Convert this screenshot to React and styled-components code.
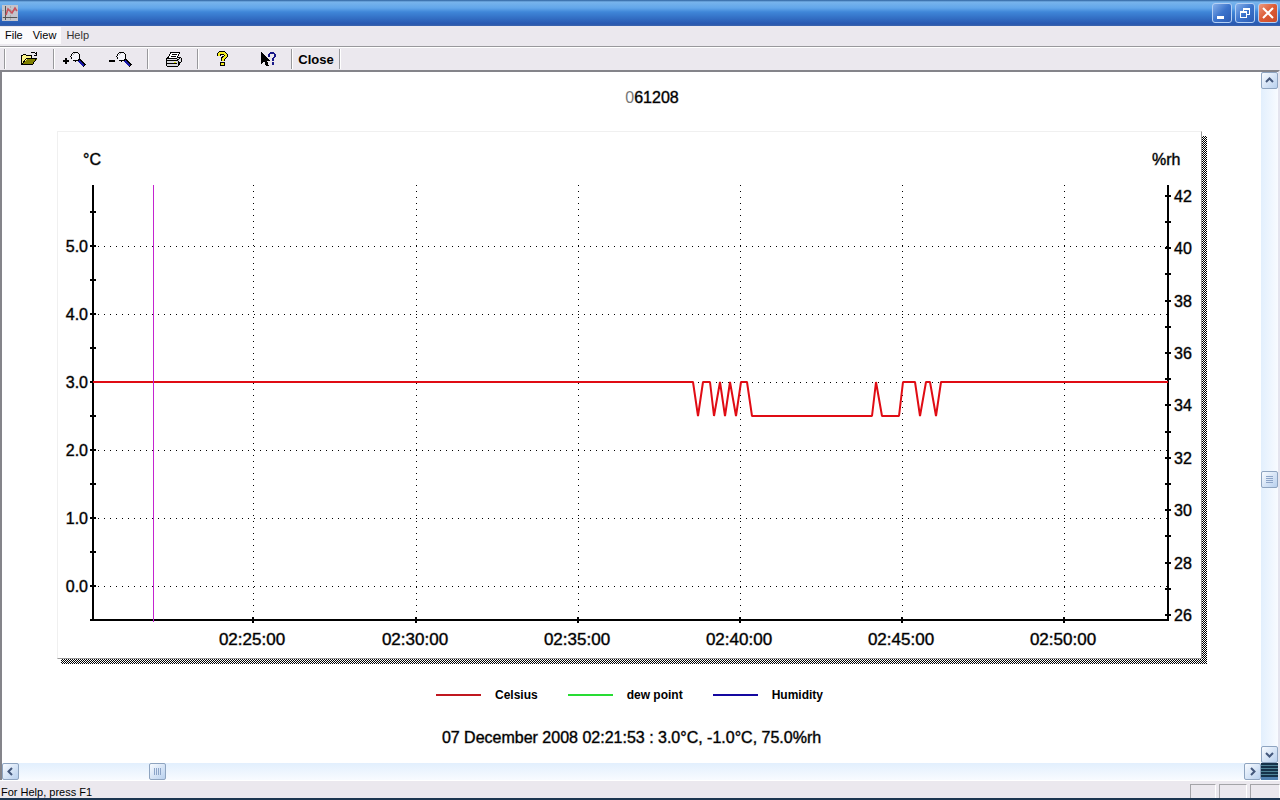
import React, { useState } from 'react';
import styled, { createGlobalStyle } from 'styled-components';

const GlobalStyle = createGlobalStyle`
  * {
    box-sizing: border-box;
  }

  body {
    margin: 0;
    overflow: hidden;
    font-family: "Liberation Sans", Arial, sans-serif;
    color: #000;
  }
`;

const Window = styled.div`
  height: 100vh;
  display: flex;
  flex-direction: column;
  background: #ebe8ee;
  border-bottom: 2px solid #1c3550;
`;

const TitleBar = styled.header`
  height: 26px;
  flex: none;
  display: flex;
  align-items: center;
  gap: 2px;
  padding: 0 2px;
  background: linear-gradient(#2c5f9c 0, #78b4ec 2px, #62a6ea 8px, #3f86d8 12px, #3573c8 17px, #2858b0 24px, #3c64ac 26px);
`;

const Spacer = styled.div`
  flex: 1;
`;

const CaptionButton = styled.button`
  width: 20px;
  height: 20px;
  margin-left: 1px;
  padding: 0;
  display: flex;
  border: 1px solid #b4d0f4;
  border-radius: 3px;
  background: ${props => (props.$danger
    ? 'linear-gradient(135deg, #ec9a80, #dc5a34 50%, #c84c2c)'
    : 'linear-gradient(135deg, #86b0ea, #3c74cc 50%, #2c5cb4)')};
`;

const MenuBar = styled.nav`
  height: 21px;
  flex: none;
  display: flex;
  align-items: center;
  padding-bottom: 2px;
  border-bottom: 1px solid #98989c;
`;

const MenuItem = styled.button`
  height: 17px;
  padding: 0 5px;
  border: 0;
  font-family: inherit;
  font-size: 11px;
  color: ${props => (props.$dim ? '#333' : '#000')};
  background: ${props => (props.$dim ? 'transparent' : '#fbfafc')};
`;

const Toolbar = styled.div`
  height: 23px;
  flex: none;
  display: flex;
  align-items: center;
  padding-left: 4px;
  border-top: 1px solid #fff;
`;

const Separator = styled.span`
  width: 2px;
  height: 20px;
  border-left: 1px solid #98989c;
  border-right: 1px solid #fff;
`;

const ToolButton = styled.button`
  width: ${props => props.$width}px;
  height: 22px;
  padding: 0;
  display: flex;
  align-items: center;
  justify-content: center;
  border: 0;
  background: transparent;
  font-family: inherit;
  font-size: 13px;
  font-weight: bold;
`;

const Client = styled.main`
  flex: 1;
  min-height: 0;
  display: grid;
  grid-template-columns: 1fr 17px;
  grid-template-rows: 1fr 17px;
  border-top: 2px solid #84848a;
  border-left: 2px solid #84848a;
  border-right: 2px solid #e4e4ee;
  background: #fff;
`;

const Page = styled.section`
  min-height: 0;
  overflow: hidden;
  display: flex;
  flex-direction: column;
`;

const Heading = styled.h1`
  margin: 0;
  padding: 16px 0 0 41px;
  height: 59px;
  text-align: center;
  font-size: 16px;
  line-height: 20px;
  font-weight: normal;
  -webkit-text-stroke: 1px rgba(0, 0, 0, 0.4);

  span {
    color: #777;
    -webkit-text-stroke: 0;
  }
`;

const Card = styled.div`
  margin: 0 54px 0 55px;
  padding: 0 5px 5px 0;
  background:
    linear-gradient(#fff, #fff) right top / 5px 5px no-repeat,
    linear-gradient(#fff, #fff) left bottom / 4px 5px no-repeat,
    conic-gradient(#000 25%, #fff 0 50%, #000 0 75%, #fff 0) 0 0 / 2px 2px;
`;

const Plot = styled.svg`
  display: block;
  width: 100%;
  height: auto;
  background: #fff;
  border: 1px solid #f0f0f0;
  border-right-color: #999;
  border-bottom-color: #999;
  font-size: 16px;

  text {
    stroke: rgba(0, 0, 0, 0.4);
    stroke-width: 1px;
  }
`;

const TimeLabel = styled.text`
  font-size: 17px;
  text-anchor: middle;
`;

const Legend = styled.ul`
  margin: 22px 0 0;
  padding: 0 4px 0 0;
  display: flex;
  justify-content: center;
  gap: 30px;
  list-style: none;
  font-size: 12px;
  font-weight: bold;
  line-height: 18px;
`;

const LegendItem = styled.li`
  display: flex;
  align-items: center;
  gap: 14px;

  &::before {
    content: '';
    width: 45px;
    height: 2px;
    background: ${props => props.$color};
  }
`;

const Reading = styled.p`
  margin: 24px 0 0;
  text-align: center;
  font-size: 16px;
  line-height: 20px;
  -webkit-text-stroke: 1px rgba(0, 0, 0, 0.4);
`;

const Track = styled.div`
  display: flex;
  flex-direction: ${props => (props.$vertical ? 'column' : 'row')};
  background: linear-gradient(${props => (props.$vertical ? 'to right' : 'to bottom')}, #e2effd, #f8fbff);
`;

const Fill = styled.span`
  flex: ${props => props.$grow};
`;

const ScrollButton = styled.button`
  width: 17px;
  height: 17px;
  flex: none;
  padding: 0;
  display: flex;
  border: 1px solid #8ea4c0;
  border-radius: 2px;
  background: linear-gradient(135deg, #f8fbff, #b8d0ee);
`;

const Corner = styled.span`
  background: repeating-linear-gradient(#16324a 0 2px, #4f8296 2px 3px);
  border-bottom: 3px solid #5080b0;
`;

const StatusBar = styled.footer`
  height: 18px;
  flex: none;
  display: flex;
  gap: 3px;
  padding-left: 1px;
  border-top: 1px solid #fff;
  font-size: 11px;
  line-height: 22px;
`;

const StatusPane = styled.span`
  width: ${props => props.$width}px;
  margin-top: 3px;
  border: 1px solid #a4a4a8;
  border-right-color: #fff;
  border-bottom: 0;
`;

const AppIcon = () => (
  <svg width="16" height="16" viewBox="0 0 16 16">
    <rect width="16" height="16" fill="#c4c4cc" />
    <path d="M0 12.5h16M8.5 1v14M0 5.5h15" stroke="#aaa" strokeDasharray="2 1" />
    <path d="M3.5 1v14M1 12.5h14" stroke="#555" />
    <path d="M4 10l2-6 4 4 3-5 2 3" fill="none" stroke="#c8505c" strokeWidth="1.5" />
  </svg>
);

const OpenIcon = () => (
  <svg width="17" height="16" viewBox="0 0 17 16" shapeRendering="crispEdges">
    <path d="M1 13V4h4v1h5v3h5l-4 6H1z" fill="#fbf58c" />
    <path d="M2 13l4-5h10l-4 5z" fill="#808000" />
    <path d="M.5 13.5v-9h1l1-1h2l1 1h5v3M.5 13.5h11l4-6H5.500L1 13M9.500 2.500l1-1h3l2 2M15.500 1v3h-3" fill="none" stroke="#000" />
  </svg>
);

const ZoomIcon = ({ plus }) => (
  <svg width="24" height="18" viewBox="0 0 24 18" shapeRendering="crispEdges">
    <path d="M1 11h6" stroke="#000" strokeWidth="2" />
    {plus && <path d="M4 8v6" stroke="#000" strokeWidth="2" />}
    <circle cx="13.500" cy="6.500" r="4.500" fill="#f4f4fa" stroke="#000" />
    <path d="M17 10l6 6" stroke="#000" strokeWidth="3" />
    <path d="M17 11l5 5" stroke="#1818a8" strokeWidth="2" />
    <path d="M11 5l2-2" stroke="#aaa" />
  </svg>
);

const PrintIcon = () => (
  <svg width="17" height="16" viewBox="0 0 17 16" shapeRendering="crispEdges">
    <path d="M1 8l3-2h11l1 1v4l-3 4H2l-1-2z" fill="#d8d8dc" stroke="#000" />
    <path d="M3 7l3-6h9l-3 6z" fill="#fff" stroke="#000" />
    <path d="M7 3.500h5M6 5.500h5M1 9.500h11l4-3M2 12.500h10M13 10v4l2-3" fill="none" stroke="#000" />
    <path d="M9 11h2" stroke="#e0e000" />
  </svg>
);

const HelpIcon = () => (
  <svg width="12" height="16" viewBox="0 0 12 16" shapeRendering="crispEdges">
    <path d="M2.500 5V3.500l2-2h3l2 2v2L6.500 8v2" fill="none" stroke="#000" strokeWidth="4" />
    <path d="M2.500 5V3.500l2-2h3l2 2v2L6.500 8v2" fill="none" stroke="#f4ec20" strokeWidth="2" />
    <path d="M4 11h5v4H4z" />
    <path d="M5 12h3v2H5z" fill="#f4ec20" />
  </svg>
);

const ContextHelpIcon = () => (
  <svg width="17" height="17" viewBox="0 0 17 17" shapeRendering="crispEdges">
    <path d="M1 1v12l3-3 2 5h3l-2-5h4z" />
    <path d="M9 5.500V3.500L10.500 2h3L15 3.500v2L12.500 8v2M12.500 11v3" fill="none" stroke="#181888" strokeWidth="2" />
  </svg>
);

const MinimizeGlyph = () => (
  <svg width="18" height="18"><path d="M4 13.500h7" stroke="#fff" strokeWidth="3" /></svg>
);

const RestoreGlyph = () => (
  <svg width="18" height="18" fill="none" stroke="#fff" shapeRendering="crispEdges">
    <path d="M4.500 7.500h6v6h-6zM4 8h7M7.500 7V4.500h6v6H11M7 5h7" />
  </svg>
);

const CloseGlyph = () => (
  <svg width="18" height="18"><path d="M4 4l10 10M14 4L4 14" stroke="#fff" strokeWidth="2" /></svg>
);

const arrows = {
  up: 'M4 9l3.500-3.500L11 9',
  down: 'M4 6l3.500 3.500L11 6',
  left: 'M9 4L5.500 7.500 9 11',
  right: 'M6 4l3.500 3.500L6 11',
};

const Arrow = ({ dir }) => (
  <svg width="15" height="15"><path d={arrows[dir]} fill="none" stroke="#44587c" strokeWidth="2" /></svg>
);

const Grip = ({ vertical }) => (
  <svg width="15" height="15" shapeRendering="crispEdges">
    <path
      d={vertical ? 'M4 4.500h7M4 6.500h7M4 8.500h7M4 10.500h7' : 'M4.500 4v7M6.500 4v7M8.500 4v7M10.500 4v7'}
      stroke="#8ca4c8"
    />
  </svg>
);

// plot area in svg units
const LEFT = 35;
const RIGHT = 1110;
const TOP = 53;
const BOTTOM = 488;

const tempY = value => 454 - value * 68;
const humidityY = value => Math.round(483 - (value - 26) * 26.2);

const times = ['02:25:00', '02:30:00', '02:35:00', '02:40:00', '02:45:00', '02:50:00'];
const timeX = index => 195 + Math.ceil(index * 162.1);

// [x, temperature]
const celsius = [
  [35, 3], [635, 3], [640, 2.5], [645, 3], [652, 3], [656, 2.5], [662, 3], [667, 2.5],
  [672, 3], [678, 2.5], [683, 3], [689, 3], [694, 2.5], [814, 2.5], [818, 3], [824, 2.5],
  [841, 2.5], [845, 3], [857, 3], [862, 2.5], [868, 3], [872, 3], [878, 2.5], [883, 3], [1110, 3],
];

const Chart = () => {
  const temps = [0, 1, 2, 3, 4, 5];
  const halves = Array.from({ length: 12 }, (_, i) => i / 2);
  const humidity = Array.from({ length: 17 }, (_, i) => 26 + i);

  return (
    <Plot viewBox="0 0 1143 526" role="img" aria-label="Temperature and humidity">
      <g shapeRendering="crispEdges" stroke="#000">
        {temps.map(t => (
          <path key={t} d={`M${LEFT + 5} ${tempY(t) + 0.5}H${RIGHT}`} strokeDasharray="1 5" />
        ))}
        {times.map((t, i) => (
          <path key={t} d={`M${timeX(i) + 0.5} ${TOP}V${BOTTOM}`} strokeDasharray="1 5" />
        ))}
        <path d={`M${LEFT - 3} ${BOTTOM}H${RIGHT}M${LEFT} ${TOP}V${BOTTOM}M${RIGHT} ${TOP}V${BOTTOM + 1}`} strokeWidth="2" />
        {halves.map(t => (
          <path key={t} d={`M${LEFT - 3} ${tempY(t)}h6`} strokeWidth="2" />
        ))}
        {humidity.map(h => (
          <path key={h} d={`M${RIGHT - 3} ${humidityY(h)}h6`} strokeWidth="2" />
        ))}
        {times.map((t, i) => (
          <path key={t} d={`M${timeX(i)} ${BOTTOM - 3}v6`} strokeWidth="2" />
        ))}
      </g>
      <polyline
        points={celsius.map(([x, t]) => `${x},${tempY(t)}`).join(' ')}
        fill="none"
        stroke="#e00c14"
        strokeWidth="2"
        strokeLinejoin="bevel"
      />
      <rect x="95" y={TOP} width="1" height={BOTTOM - TOP + 2} fill="#c424d0" />
      <text x="25" y="33">°C</text>
      <text x="1094" y="33">%rh</text>
      {temps.map(t => (
        <text key={t} x="30" y={tempY(t) + 6} textAnchor="end">{t.toFixed(1)}</text>
      ))}
      {humidity.filter(h => h % 2 === 0).map(h => (
        <text key={h} x="1116" y={humidityY(h) + 6}>{h}</text>
      ))}
      {times.map((t, i) => (
        <TimeLabel key={t} x={timeX(i) - 1} y="513">{t}</TimeLabel>
      ))}
    </Plot>
  );
};

const App = () => {
  const [isOpen, setIsOpen] = useState(true);

  return (
    <>
      <GlobalStyle />
      <Window>
        <TitleBar>
          <AppIcon />
          <Spacer />
          <CaptionButton aria-label="Minimize"><MinimizeGlyph /></CaptionButton>
          <CaptionButton aria-label="Restore"><RestoreGlyph /></CaptionButton>
          <CaptionButton aria-label="Close window" $danger><CloseGlyph /></CaptionButton>
        </TitleBar>
        <MenuBar>
          <MenuItem>File</MenuItem>
          <MenuItem>View</MenuItem>
          <MenuItem $dim>Help</MenuItem>
        </MenuBar>
        <Toolbar>
          <Separator />
          <ToolButton $width={47} aria-label="Open"><OpenIcon /></ToolButton>
          <Separator />
          <ToolButton $width={38} aria-label="Zoom in"><ZoomIcon plus /></ToolButton>
          <ToolButton $width={54} aria-label="Zoom out"><ZoomIcon /></ToolButton>
          <Separator />
          <ToolButton $width={48} aria-label="Print"><PrintIcon /></ToolButton>
          <Separator />
          <ToolButton $width={46} aria-label="Help"><HelpIcon /></ToolButton>
          <ToolButton $width={46} aria-label="Context help"><ContextHelpIcon /></ToolButton>
          <Separator />
          <ToolButton $width={46} onClick={() => setIsOpen(false)}>Close</ToolButton>
          <Separator />
        </Toolbar>
        <Client>
          <Page>
            {isOpen && (
              <>
                <Heading><span>0</span>61208</Heading>
                <Card><Chart /></Card>
                <Legend>
                  <LegendItem $color="#c01820">Celsius</LegendItem>
                  <LegendItem $color="#28dc34">dew point</LegendItem>
                  <LegendItem $color="#1408a0">Humidity</LegendItem>
                </Legend>
                <Reading>07 December 2008 02:21:53 : 3.0°C, -1.0°C, 75.0%rh</Reading>
              </>
            )}
          </Page>
          <Track $vertical>
            <ScrollButton aria-label="Scroll up"><Arrow dir="up" /></ScrollButton>
            <Fill $grow={382} />
            <ScrollButton aria-label="Vertical scroll thumb"><Grip vertical /></ScrollButton>
            <Fill $grow={258} />
            <ScrollButton aria-label="Scroll down"><Arrow dir="down" /></ScrollButton>
          </Track>
          <Track>
            <ScrollButton aria-label="Scroll left"><Arrow dir="left" /></ScrollButton>
            <Fill $grow={130} />
            <ScrollButton aria-label="Horizontal scroll thumb"><Grip /></ScrollButton>
            <Fill $grow={1078} />
            <ScrollButton aria-label="Scroll right"><Arrow dir="right" /></ScrollButton>
          </Track>
          <Corner />
        </Client>
        <StatusBar>
          <span>For Help, press F1</span>
          <Spacer />
          <StatusPane $width={26} />
          <StatusPane $width={28} />
          <StatusPane $width={30} />
        </StatusBar>
      </Window>
    </>
  );
};

export default App;
